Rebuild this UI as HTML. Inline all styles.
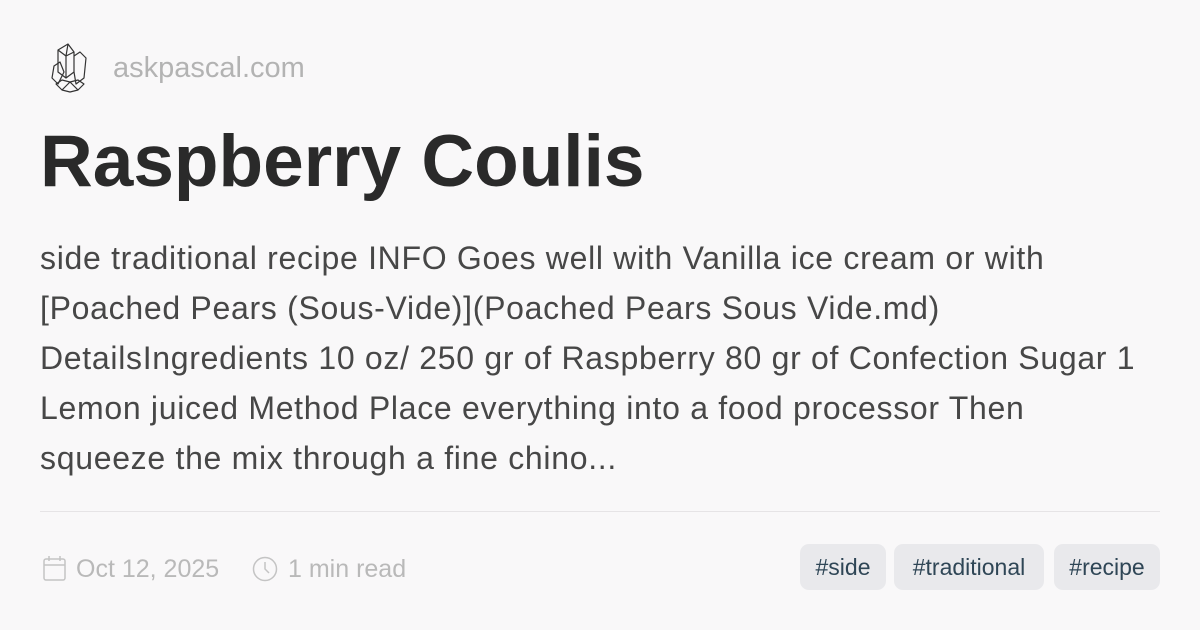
<!DOCTYPE html>
<html><head><meta charset="utf-8"><style>
body{margin:0;width:1200px;height:630px;background:#f9f8f9;font-family:"Liberation Sans",sans-serif;position:relative;overflow:hidden}
.site{position:absolute;left:113px;top:52px;font-size:29px;color:#b3b3b3}
h1{position:absolute;left:40px;top:120px;margin:0;font-size:73px;font-weight:bold;color:#2a2a2a}
.desc{position:absolute;left:40px;top:233px;font-size:32px;letter-spacing:0.7px;line-height:50px;color:#474747;white-space:nowrap}
.hr{position:absolute;left:40px;right:40px;top:511px;height:1px;background:#e6e4e6}
.meta{position:absolute;top:555px;font-size:25px;color:#b9b9b9}
.tag{position:absolute;top:544px;height:46px;line-height:46px;background:#e9e9ec;border-radius:9px;color:#2f4656;font-size:23px;text-align:center}
</style></head><body>
<svg style="position:absolute;left:48px;top:42px" width="40" height="52" viewBox="0 0 40 52" fill="none" stroke="#333" stroke-width="1.2" stroke-linejoin="round">
<path d="M10 8 L20 2 L26 10 L26 30 L18 36 L10 30 Z M20 2 L18 14 L18 36 M10 8 L18 14 L26 10"/>
<path d="M26 14 L32 10 L38 16 L36 36 L28 42 L26 30"/>
<path d="M6 24 L12 20 L16 30 L10 42 L4 36 Z"/>
<path d="M8 42 L14 48 L22 50 L30 48 L36 42 L30 38 L22 40 L14 38 Z M14 48 L22 40 L30 48"/>
</svg>
<div class="site">askpascal.com</div>
<h1>Raspberry Coulis</h1>
<div class="desc">side traditional recipe INFO Goes well with Vanilla ice cream or with<br>[Poached Pears (Sous-Vide)](Poached Pears Sous Vide.md)<br>DetailsIngredients 10 oz/ 250 gr of Raspberry 80 gr of Confection Sugar 1<br>Lemon juiced Method Place everything into a food processor Then<br>squeeze the mix through a fine chino...</div>
<div class="hr"></div>
<svg style="position:absolute;left:43px;top:556px" width="24" height="26" viewBox="0 0 24 26" fill="none" stroke="#c4c4c4" stroke-width="1.5"><rect x="1" y="3" width="21" height="21" rx="2"/><path d="M1 9h21M6 0v5M17 0v5"/></svg>
<div class="meta" style="left:76px">Oct 12, 2025</div>
<svg style="position:absolute;left:252px;top:556px" width="26" height="26" viewBox="0 0 26 26" fill="none" stroke="#c4c4c4" stroke-width="1.5"><circle cx="13" cy="13" r="11.5"/><path d="M13 6v7l4 4"/></svg>
<div class="meta" style="left:288px">1 min read</div>
<div class="tag" style="left:800px;width:86px">#side</div>
<div class="tag" style="left:894px;width:150px">#traditional</div>
<div class="tag" style="left:1054px;width:106px">#recipe</div>
</body></html>
